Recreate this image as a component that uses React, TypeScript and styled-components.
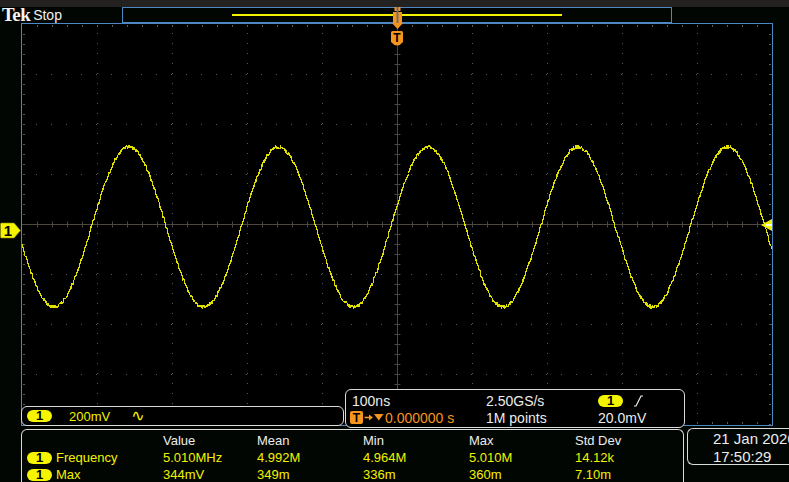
import React from 'react';
import styled, { createGlobalStyle } from 'styled-components';

const BLUE = '#4d88c4';
const YELLOW = '#f2f200';
const ORANGE = '#f7941d';
const FRAME = '#dadada';
const TXT = '#ececec';

const GlobalStyle = createGlobalStyle`
  html, body { margin: 0; padding: 0; background: #020602; }
  body { width: 789px; height: 482px; overflow: hidden; font-family: "Liberation Sans", Arial, sans-serif; }
`;

const Screen = styled.div`
  position: relative;
  width: 789px;
  height: 482px;
  overflow: hidden;
  background: #020602;
  display: flex;
  flex-direction: column;
  color: ${TXT};
  font-family: "Liberation Sans", Arial, sans-serif;
`;

const TopStrip = styled.div`
  flex: none;
  height: 7px;
  background: #232220;
`;

const Header = styled.div`
  flex: none;
  height: 16px;
  display: flex;
`;

const Brand = styled.div`
  width: 122px;
  box-sizing: border-box;
  padding-left: 2px;
  display: flex;
  align-items: flex-start;
  gap: 3px;
  line-height: 16px;
`;

const Logo = styled.span`
  font-family: "Liberation Serif", "Times New Roman", serif;
  font-weight: 700;
  font-size: 19px;
  color: #f4f4f4;
  letter-spacing: -0.6px;
`;

const RunState = styled.span`
  font-size: 14px;
  color: #f0f0f0;
`;

const RecordView = styled.div`
  width: 550px;
  height: 16px;
  box-sizing: border-box;
  border: 1px solid ${BLUE};
  display: flex;
  align-items: center;
`;

const ViewBar = styled.div<{ $start: number; $len: number }>`
  margin-left: ${(p) => p.$start}px;
  width: ${(p) => p.$len}px;
  height: 2px;
  margin-top: -1px;
  background: ${YELLOW};
`;

const Middle = styled.div`
  flex: none;
  height: 403px;
  display: flex;
`;

const LeftStrip = styled.div`
  flex: none;
  width: 21px;
  position: relative;
`;

const GroundMarker = styled.svg<{ $top: number }>`
  position: absolute;
  left: 0;
  top: ${(p) => p.$top}px;
`;

const Graticule = styled.div`
  flex: none;
  position: relative;
  width: 752px;
  height: 403px;
  box-sizing: border-box;
  border: 1px solid ${BLUE};
  background: #000;
`;

const GridSvg = styled.svg`
  display: block;
`;

const TriggerMarker = styled.svg`
  position: absolute;
  left: 391px;
  top: 7px;
`;

const ReadoutBar = styled.div`
  position: absolute;
  left: -1px;
  top: 365px;
  display: flex;
  align-items: flex-end;
  gap: 1px;
`;

const ChannelBox = styled.div`
  width: 323px;
  height: 20px;
  margin-bottom: 2px;
  box-sizing: border-box;
  border: 1px solid ${FRAME};
  border-radius: 6px;
  background: #000;
  display: flex;
  align-items: center;
  padding-left: 5px;
  font-size: 13px;
  color: ${YELLOW};
`;

const Pill = styled.span`
  flex: none;
  display: inline-flex;
  align-items: center;
  justify-content: center;
  width: 25px;
  height: 12px;
  border-radius: 6px;
  background: #f5f500;
  color: #000;
  font-weight: 700;
  font-size: 13px;
  line-height: 12px;
`;

const Scale = styled.span`
  margin-left: 17px;
`;

const Coupling = styled.span`
  margin-left: 21px;
  font-family: "DejaVu Sans", sans-serif;
  font-size: 16px;
  line-height: 16px;
`;

const TimebaseBox = styled.div`
  width: 340px;
  height: 39px;
  box-sizing: border-box;
  border: 1px solid ${FRAME};
  border-radius: 6px;
  background: #000;
  padding: 2px 0 0 6px;
  display: grid;
  grid-template-columns: 134px 112px 1fr;
  grid-auto-rows: 17px;
  align-items: center;
  font-size: 14px;
  color: ${TXT};
`;

const Cell = styled.span<{ $color?: string }>`
  display: flex;
  align-items: center;
  white-space: nowrap;
  color: ${(p) => p.$color ?? 'inherit'};
`;

const TBadge = styled.span`
  flex: none;
  display: inline-flex;
  align-items: center;
  justify-content: center;
  width: 13px;
  height: 13px;
  margin-left: -2px;
  border-radius: 2px;
  background: ${ORANGE};
  color: #000;
  font-weight: 700;
  font-size: 12px;
`;

const DelayIcon = styled.svg`
  flex: none;
  margin: 0 1px 0 1px;
`;

const Bottom = styled.div`
  flex: 1;
  display: flex;
  align-items: flex-start;
  padding-left: 21px;
`;

const MeasBox = styled.div`
  flex: none;
  margin-top: 3px;
  width: 663px;
  height: 60px;
  box-sizing: border-box;
  border: 1px solid ${FRAME};
  border-bottom: none;
  border-radius: 6px 6px 0 0;
  padding: 2px 0 0 5px;
  display: grid;
  grid-template-columns: 136px 94px 106px 106px 106px 1fr;
  grid-auto-rows: 17px;
  align-items: center;
  font-size: 13px;
`;

const Head = styled.span`
  color: ${TXT};
`;

const Val = styled.span`
  color: ${YELLOW};
`;

const Label = styled.span`
  display: flex;
  align-items: center;
  gap: 4px;
  color: ${YELLOW};
`;

const DateBox = styled.div`
  flex: none;
  width: 110px;
  margin-top: 2px;
  margin-left: 3px;
  height: 37px;
  box-sizing: border-box;
  border: 1px solid ${FRAME};
  border-right: none;
  border-radius: 6px 0 0 6px;
  padding: 1px 0 0 25px;
  font-size: 15px;
  line-height: 18px;
  white-space: nowrap;
  color: ${TXT};
`;

/* ---------- drawings ---------- */

const W = 750;
const H = 401;

function makeTrace(): string {
  let seed = 987654;
  const rnd = () => {
    seed = (seed * 1103515245 + 12345) & 0x7fffffff;
    return seed / 0x7fffffff;
  };
  const P = 149.7;
  const xt = 32;
  const cy = 203;
  const A = 80;
  let d = '';
  for (let i = 0; i <= W * 2; i++) {
    const x = i / 2;
    const y = cy + A * Math.cos((2 * Math.PI * (x - xt)) / P) + (rnd() - 0.5) * 3.4;
    d += (i ? 'L' : 'M') + x + ' ' + y.toFixed(1);
  }
  return d;
}

const TRACE = makeTrace();

function GridDrawing() {
  const vLines = [75, 150, 225, 300, 450, 525, 600, 675];
  const hLines = [50, 100, 150, 250, 300, 350];
  const cx = 375.5;
  const cy = 200.5;
  const hTicks: number[] = [];
  for (let x = 15; x < W; x += 15) hTicks.push(x);
  const vTicks: number[] = [];
  for (let y = 10; y < H; y += 10) vTicks.push(y);
  const dot = '#5a5a5a';
  const centre = '#4d473d';
  return (
    <GridSvg width={W} height={H} viewBox={`0 0 ${W} ${H}`}>
      {vLines.map((x) => (
        <line key={'v' + x} x1={x + 0.5} y1={0} x2={x + 0.5} y2={H} stroke={dot} strokeWidth={1} strokeDasharray="1 9" strokeDashoffset={-9} />
      ))}
      {hLines.map((y) => (
        <line key={'h' + y} x1={0} y1={y + 0.5} x2={W} y2={y + 0.5} stroke={dot} strokeWidth={1} strokeDasharray="1 14" strokeDashoffset={-14} />
      ))}
      {hTicks.map((x) => (
        <g key={'e' + x}>
          <rect x={x} y={1} width={1} height={2} fill={dot} />
          <rect x={x} y={H - 3} width={1} height={2} fill={dot} />
        </g>
      ))}
      {vTicks.map((y) => (
        <g key={'f' + y}>
          <rect x={1} y={y} width={2} height={1} fill={dot} />
          <rect x={W - 3} y={y} width={2} height={1} fill={dot} />
        </g>
      ))}
      <line x1={0} y1={cy} x2={W} y2={cy} stroke={centre} strokeWidth={1} />
      <line x1={cx} y1={0} x2={cx} y2={H} stroke={centre} strokeWidth={1} />
      {hTicks.map((x) => (
        <line key={'ct' + x} x1={x + 0.5} y1={cy - 3} x2={x + 0.5} y2={cy + 3} stroke={centre} strokeWidth={1} />
      ))}
      {vTicks.map((y) => (
        <line key={'cv' + y} x1={cx - 3} y1={y + 0.5} x2={cx + 3} y2={y + 0.5} stroke={centre} strokeWidth={1} />
      ))}
      <path d={TRACE} fill="none" stroke="#e0e000" strokeWidth={1.2} strokeLinejoin="round" shapeRendering="crispEdges" />
      <polygon points="739,201 750,195 750,207" fill={YELLOW} />
      <rect x={744} y={200} width={6} height={2} fill="#fafae0" />
    </GridSvg>
  );
}

function TriggerPosition() {
  return (
    <TriggerMarker width={13} height={39} viewBox="0 0 13 39">
      <rect x={3.5} y={0} width={6} height={4} fill={ORANGE} />
      <rect x={2} y={5} width={9} height={11} fill={ORANGE} />
      <rect x={5.5} y={0} width={2} height={16} fill="#6e6e6e" />
      <polygon points="1,16 12,16 6.5,22" fill={ORANGE} />
      <path d="M0 25.5 Q0 24 1.5 24 H10.5 Q12 24 12 25.5 V35 Q9 38.5 6 38.5 Q3 38.5 0 35 Z" fill={ORANGE} />
      <text x={6} y={35} textAnchor="middle" fontFamily="Liberation Sans, Arial, sans-serif" fontWeight={700} fontSize={12} fill="#000">
        T
      </text>
    </TriggerMarker>
  );
}

function SlopeIcon() {
  return (
    <svg width={10} height={12} viewBox="0 0 10 12" style={{ marginLeft: 11 }}>
      <polyline points="0,11 2,11 7,1 9,1" fill="none" stroke={TXT} strokeWidth={1.2} />
    </svg>
  );
}

function DelayArrow() {
  return (
    <DelayIcon width={20} height={13} viewBox="0 0 20 13">
      <line x1={0.5} y1={6.5} x2={6} y2={6.5} stroke={ORANGE} strokeWidth={1.6} />
      <polygon points="5,3.5 9,6.5 5,9.5" fill={ORANGE} />
      <polygon points="10,3 19.5,3 14.75,9.5" fill={ORANGE} />
    </DelayIcon>
  );
}

const measurements = [
  { name: 'Frequency', values: ['5.010MHz', '4.992M', '4.964M', '5.010M', '14.12k'] },
  { name: 'Max', values: ['344mV', '349m', '336m', '360m', '7.10m'] },
];

const headers = ['Value', 'Mean', 'Min', 'Max', 'Std Dev'];

export default function App() {
  return (
    <>
      <GlobalStyle />
      <Screen>
        <TopStrip />
        <Header>
          <Brand>
            <Logo>Tek</Logo>
            <RunState>Stop</RunState>
          </Brand>
          <RecordView>
            <ViewBar $start={109} $len={330} />
          </RecordView>
        </Header>
        <Middle>
          <LeftStrip>
            <GroundMarker $top={199} width={21} height={17} viewBox="0 0 21 17">
              <path d="M1.5 1 H14 L20.5 8.5 L14 16 H1.5 Q0.5 16 0.5 15 V2 Q0.5 1 1.5 1 Z" fill="#f5f500" stroke="#8a8a10" strokeWidth={0.6} />
              <text x={8} y={14} textAnchor="middle" fontFamily="Liberation Sans, Arial, sans-serif" fontWeight={700} fontSize={15} fill="#000">
                1
              </text>
            </GroundMarker>
          </LeftStrip>
          <Graticule>
            <GridDrawing />
            <ReadoutBar>
              <ChannelBox>
                <Pill>1</Pill>
                <Scale>200mV</Scale>
                <Coupling>∿</Coupling>
              </ChannelBox>
              <TimebaseBox>
                <Cell>100ns</Cell>
                <Cell>2.50GS/s</Cell>
                <Cell>
                  <Pill>1</Pill>
                  <SlopeIcon />
                </Cell>
                <Cell $color={ORANGE}>
                  <TBadge>T</TBadge>
                  <DelayArrow />
                  0.000000 s
                </Cell>
                <Cell>1M points</Cell>
                <Cell>20.0mV</Cell>
              </TimebaseBox>
            </ReadoutBar>
          </Graticule>
        </Middle>
        <Bottom>
          <MeasBox>
            <span />
            {headers.map((h) => (
              <Head key={h}>{h}</Head>
            ))}
            {measurements.map((m) => (
              <React.Fragment key={m.name}>
                <Label>
                  <Pill>1</Pill>
                  {m.name}
                </Label>
                {m.values.map((v, i) => (
                  <Val key={i}>{v}</Val>
                ))}
              </React.Fragment>
            ))}
          </MeasBox>
          <DateBox>
            21 Jan 2026
            <br />
            17:50:29
          </DateBox>
        </Bottom>
        <TriggerPosition />
      </Screen>
    </>
  );
}
